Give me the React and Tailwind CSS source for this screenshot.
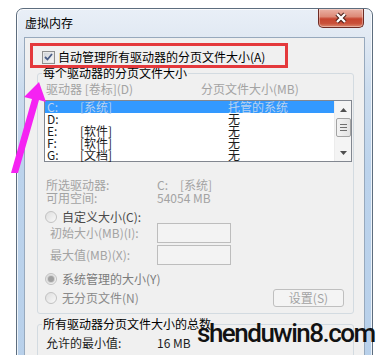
import React from "react";

function Checkbox() {
  return (
    <span className="w-[13px] h-[13px] shrink-0 border border-[#8e8f8f] bg-[#f4f4f4] flex items-center justify-center">
      <span className="w-[11px] h-[11px] border border-[#e8e8e8] bg-[linear-gradient(135deg,#cfd3d9,#f7f7f7)] flex items-center justify-center">
        <svg width="9" height="8" viewBox="0 0 9 8">
          <path d="M1 4 L3.5 6.5 L8 1" fill="none" stroke="#4a5d86" strokeWidth="1.8" />
        </svg>
      </span>
    </span>
  );
}

function Radio({ checked }) {
  return (
    <span className="w-[12px] h-[12px] shrink-0 rounded-full border border-[#c2c2c2] bg-[linear-gradient(135deg,#dedede,#f8f8f8)] flex items-center justify-center">
      {checked && (
        <span className="w-[6px] h-[6px] rounded-full bg-[#a0a0a0] shadow-[0_0_0_1px_#d0d0d0]" />
      )}
    </span>
  );
}

function TextBox() {
  return <div className="w-[74px] h-[20px] border border-[#bdbdbd] bg-[#f3f3f3]" />;
}

const rows = [
  ["C:", "[系统]", "托管的系统", true],
  ["D:", "", "无", false],
  ["E:", "[软件]", "无", false],
  ["F:", "[软件]", "无", false],
  ["G:", "[文档]", "无", false],
];

export default function App() {
  const body = "font-['Noto_Sans_CJK_SC',sans-serif] text-[12px]";
  return (
    <div className="relative w-[380px] h-[355px] overflow-hidden bg-white">
      <div className="ml-[16px] mt-[8px] w-[357px] h-[370px] rounded-t-[7px] border border-[#5d6d7e] bg-[linear-gradient(to_bottom,#e9eff7_0px,#e1e9f3_28px,#cbdcee_80px,#bcd3ec_160px,#b8d0ea_100%)] shadow-[inset_0_0_0_1px_rgba(255,255,255,0.75)] flex flex-col">
        <div className="h-[28px] shrink-0 flex justify-between items-start">
          <div className="pl-[8px] pt-[7px] text-[12px] leading-[14px] text-black font-['Noto_Sans_CJK_SC',sans-serif]">
            虚拟内存
          </div>
          <div className="mr-[8px] w-[46px] h-[19px] rounded-b-[5px] border border-t-0 border-[#6e2b24] bg-[linear-gradient(to_bottom,#eab1a5_0%,#dd8a78_42%,#c64530_55%,#c9513a_80%,#dc8a70_100%)] shadow-[inset_0_0_0_1px_rgba(255,255,255,0.35)] flex items-center justify-center">
            <svg width="14" height="12" viewBox="0 0 14 12">
              <path d="M3 2 L11 10 M11 2 L3 10" stroke="#4a1e18" strokeWidth="4.4" />
              <path d="M3 2 L11 10 M11 2 L3 10" stroke="#ffffff" strokeWidth="2.4" />
            </svg>
          </div>
        </div>

        <div className={`relative mx-[7px] flex-1 border border-[#97a9bd] bg-[#f0f0f0] flex flex-col ${body}`}>
          <div className="mt-[12px] h-[14px] pl-[17px] flex items-center">
            <Checkbox />
            <span className="ml-[3px] leading-[14px] text-black">自动管理所有驱动器的分页文件大小(A)</span>
          </div>

          <fieldset className="ml-[12px] mt-[2px] w-[317px] rounded-[3px] border border-[#d3dbe1] pb-[6px]">
            <legend className="ml-[4px] px-[1px] leading-[14px] text-black">每个驱动器的分页文件大小</legend>
            <div className="mt-[3px] h-[12px] pl-[8px] flex items-center leading-[12px] text-[#a3a3a3]">
              <span className="w-[155px]">驱动器 [卷标](D)</span>
              <span>分页文件大小(MB)</span>
            </div>

            <div className="mt-[5px] ml-[6px] w-[308px] h-[62px] border border-[#828790] bg-white flex">
              <div className="flex-1 flex flex-col">
                {rows.map(([d, l, s, sel]) => (
                  <div
                    key={d}
                    className={`h-[12px] pl-[2px] flex items-center leading-[12px] ${sel ? "bg-[#3399ff] text-[#b9d1ee]" : "text-[#1c1c1c]"}`}
                  >
                    <span className="w-[33px]">{d}</span>
                    <span className="w-[148px]">{l}</span>
                    <span>{s}</span>
                  </div>
                ))}
              </div>
              <div className="w-[17px] bg-[#f4f4f4] border-l border-[#ececec] flex flex-col items-center">
                <div className="h-[17px] flex items-center justify-center">
                  <svg width="7" height="4" viewBox="0 0 7 4"><path d="M0 4 L3.5 0 L7 4 Z" fill="#4f4f4f" /></svg>
                </div>
                <div className="w-[15px] h-[19px] rounded-[2px] border border-[#a3a3a3] bg-[linear-gradient(to_right,#f3f3f3,#e2e2e2)] flex flex-col items-center justify-center gap-[2px]">
                  <span className="w-[7px] h-[1px] bg-[#6e6e6e]" />
                  <span className="w-[7px] h-[1px] bg-[#6e6e6e]" />
                  <span className="w-[7px] h-[1px] bg-[#6e6e6e]" />
                </div>
                <div className="flex-1" />
                <div className="h-[17px] flex items-center justify-center">
                  <svg width="7" height="4" viewBox="0 0 7 4"><path d="M0 0 L3.5 4 L7 0 Z" fill="#4f4f4f" /></svg>
                </div>
              </div>
            </div>

            <div className="mt-[16px] pl-[8px] flex flex-col leading-[13px] text-[#a3a3a3]">
              <div className="flex h-[13px] items-center">
                <span className="w-[111px]">所选驱动器:</span>
                <span className="w-[23px]">C:</span>
                <span>[系统]</span>
              </div>
              <div className="flex h-[13px] items-center">
                <span className="w-[111px]">可用空间:</span>
                <span>54054 MB</span>
              </div>
            </div>

            <div className="mt-[6px] h-[13px] pl-[7px] flex items-center">
              <Radio />
              <span className="ml-[5px] leading-[13px] text-[#4a4a4a]">自定义大小(C):</span>
            </div>
            <div className="h-[20px] pl-[12px] flex items-center text-[#a3a3a3]">
              <span className="w-[107px] leading-[12px]">初始大小(MB)(I):</span>
              <TextBox />
            </div>
            <div className="mt-[2px] h-[20px] pl-[12px] flex items-center text-[#a3a3a3]">
              <span className="w-[107px] leading-[12px]">最大值(MB)(X):</span>
              <TextBox />
            </div>

            <div className="mt-[8px] h-[12px] pl-[7px] flex items-center">
              <Radio checked />
              <span className="ml-[5px] leading-[12px] text-[#7c7c7c]">系统管理的大小(Y)</span>
            </div>
            <div className="mt-[4px] h-[18px] pl-[7px] pr-[9px] flex items-center justify-between">
              <div className="flex items-center">
                <Radio />
                <span className="ml-[5px] leading-[12px] text-[#8a8a8a]">无分页文件(N)</span>
              </div>
              <div className="w-[71px] h-[18px] rounded-[3px] border border-[#bfbfbf] bg-[#f4f4f4] flex items-center justify-center leading-[12px] text-[#a3a3a3]">
                设置(S)
              </div>
            </div>
          </fieldset>

          <fieldset className="ml-[12px] mt-[3px] w-[317px] rounded-[3px] border border-[#d3dbe1] pb-[20px]">
            <legend className="ml-[4px] px-[1px] leading-[14px] text-black">所有驱动器分页文件大小的总数</legend>
            <div className="mt-[6px] h-[12px] pl-[8px] flex items-center leading-[12px] text-[#1c1c1c]">
              <span className="w-[111px]">允许的最小值:</span>
              <span>16 MB</span>
            </div>
          </fieldset>

          <div className="absolute left-[5px] top-[5px] w-[258px] h-[25px] border-[3px] border-[#e4393c]" />
        </div>
      </div>

      <div className="absolute left-[197px] top-[320px] font-['Roboto',sans-serif] font-medium text-[26px] leading-[26px] tracking-[-1.5px] text-[#121212]">
        shenduwin8.com
      </div>

      <svg className="absolute left-0 top-0" width="60" height="180" viewBox="0 0 60 180">
        <polygon
          points="39,82 46,102 39,100 18,173 11,173 32,99 24,97"
          fill="#f522f2"
        />
      </svg>
    </div>
  );
}
